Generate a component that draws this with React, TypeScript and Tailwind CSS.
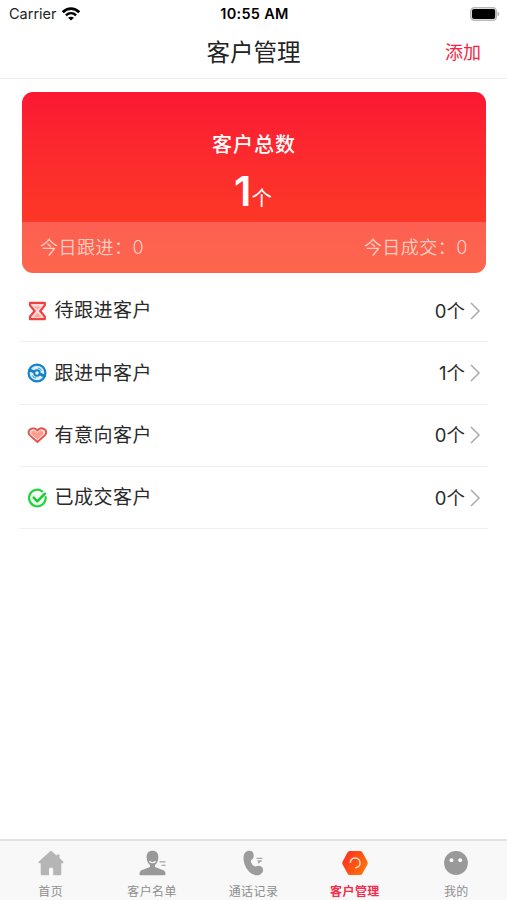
import type { ReactNode } from "react";
import { clsx } from "clsx";

function WifiIcon() {
  return (
    <svg width="18" height="14" viewBox="0 0 18 14" fill="none">
      <path d="M.8 5.200C5.400.4 12.600.4 17.200 5.200" stroke="#000" strokeWidth="2.800" />
      <path d="M3.900 8.400c3-2.800 7.200-2.800 10.200 0" stroke="#000" strokeWidth="2.400" />
      <path d="M9 13.600 6.100 10.700c1.700-1.400 4.100-1.400 5.800 0z" fill="#000" />
    </svg>
  );
}

function BatteryIcon() {
  return (
    <svg width="30" height="14" viewBox="0 0 30 14" fill="none">
      <rect x="0.8" y="0.8" width="25.600" height="12.400" rx="3.600" stroke="#b8b8b8" strokeWidth="1.500" />
      <rect x="2" y="2" width="23.200" height="10" rx="2" fill="#000" />
      <path d="M27.600 4.800c2.200.6 2.200 3.800 0 4.400z" fill="#b0b0b0" />
    </svg>
  );
}

function HourglassIcon() {
  return (
    <svg width="20" height="20" viewBox="0 0 20 20" fill="none" strokeLinejoin="round">
      <path
        d="M3 1.800h14.800v2.600L13.200 10l4.600 5.600v2.600H3v-2.600L7.600 10 3 4.400z"
        fill="#fdd9d7"
        stroke="#ee4240"
        strokeWidth="2.200"
      />
      <path d="M7.100 5.400h6.600l-3.300 3.200zM10.400 11.800l3.800 4.200H6.600z" fill="#f9a7a2" />
    </svg>
  );
}

function FollowingIcon() {
  return (
    <svg width="20" height="20" viewBox="0 0 20 20" fill="none" stroke="#1680c8">
      <circle cx="10" cy="10" r="8.400" fill="#d9eefb" strokeWidth="2.200" />
      <path d="M2 6.700 7 9M13 11l5 2.300" strokeWidth="3" />
      <path d="M10.800 5c1.900.2 3.100 1.100 3.800 2.600M9.200 15c-1.900-.2-3.100-1.100-3.800-2.600" stroke="#4da5dc" strokeWidth="1.200" />
      <circle cx="10" cy="10" r="2.700" fill="#fff" strokeWidth="2" />
    </svg>
  );
}

function HeartIcon() {
  return (
    <svg width="20" height="20" viewBox="0 0 20 20" fill="none" strokeLinejoin="round">
      <path
        d="M10.400 17 2.900 10.400C.8 8.200 1.300 5.200 3.500 4.100 5.800 2.900 8.800 3.200 10.400 5.500c1.600-2.300 4.500-2.600 6.800-1.400 2.200 1.100 2.700 4.100.6 6.300z"
        fill="#fde3df"
        stroke="#e8504a"
        strokeWidth="1.900"
      />
      <path
        d="m10.400 14.500-5.200-4.700C3.600 8.200 4.400 6 6.200 5.800c1.700-.2 3.200.8 4.200 2.300 1-1.500 2.300-2.500 4-2.300 1.800.2 2.800 2.400 1.200 4z"
        fill="#fb9f8d"
      />
    </svg>
  );
}

function DoneIcon() {
  return (
    <svg width="20" height="20" viewBox="0 0 20 20" fill="none" strokeLinecap="round" strokeLinejoin="round">
      <path d="M18.600 9.200A8.300 8.300 0 1 1 15.200 3.300" fill="#f1fdf3" stroke="#22d33c" strokeWidth="2.200" />
      <path d="m6.700 9.600 3.600 3.700 7.600-7.600" stroke="#16cb32" strokeWidth="2.400" />
    </svg>
  );
}

function HomeIcon() {
  return (
    <svg width="26" height="26" viewBox="0 0 26 26" fill="#b5b5b5">
      <path d="M12.200 1.200a1.200 1.200 0 0 1 1.600 0l5 4.500V4.600h2.700v3.500l3.700 3.500c.7.700.3 1.700-.6 1.700h-1.300v10.400c0 .9-.6 1.500-1.500 1.500h-6.600v-5.800c0-1-.6-1.600-1.500-1.600h-1.200c-.9 0-1.500.6-1.500 1.600v5.800H4.200c-.9 0-1.500-.6-1.500-1.500V13.300H1.400c-.9 0-1.300-1-.6-1.700z" />
    </svg>
  );
}

function ContactsIcon() {
  return (
    <svg width="28" height="26" viewBox="0 0 28 26" fill="none">
      <path
        d="M14.500.8c4 0 6 2.500 5.900 6.600-.1 3.400-1.600 6.100-3.400 7.500v2.200l7.800 3c1.800.7 2.700 1.800 2.700 3.600 0 1-.5 1.500-1.500 1.500H3c-1 0-1.500-.5-1.500-1.500 0-1.800.9-2.900 2.700-3.600l7.800-3v-2.200c-1.800-1.400-3.300-4.100-3.400-7.500C8.500 3.300 10.500.8 14.500.8z"
        fill="#999"
      />
      <path d="M11.400 11.200c1.800 1.900 4.400 1.900 6.200 0" stroke="#f8f8f8" strokeWidth="1.300" />
      <path d="M21.500 11.900h6M23.500 15.400h4" stroke="#a3a3a3" strokeWidth="1.300" />
    </svg>
  );
}

function CallIcon() {
  return (
    <svg width="26" height="26" viewBox="0 0 26 26" fill="none">
      <path
        d="M8.500.8c2.900-.5 4.700.8 5.100 3.500.3 2.500 0 4.300-1.700 5.300-1.200.7-1.300 1.800-.7 3.100.7 1.600 1.600 2.600 2.800 3.300 1.200.7 2.200.3 3.500-.1 2.500-.7 5.200.9 5.500 3.400.4 3.100-2 5.700-5.500 6C11.800 25.400 6.500 20.600 4.300 13.500 2.600 7.300 3.600 1.700 8.500.8z"
        fill="#9c9c9c"
      />
      <path d="M16.500 8.300h6M17.500 11h4.200M18.200 13.300l1.800-2" stroke="#a8a8a8" strokeWidth="1.300" />
    </svg>
  );
}

function ManageIcon() {
  return (
    <svg width="26" height="26" viewBox="0 0 26 26" fill="none">
      <defs>
        <linearGradient id="manage" x1="3" y1="6" x2="24" y2="20" gradientUnits="userSpaceOnUse">
          <stop stopColor="#fb3520" />
          <stop offset="1" stopColor="#ff7508" />
        </linearGradient>
      </defs>
      <path
        d="M8.200 1h9.600c1.300 0 2.100.5 2.700 1.600l4.600 8.300c.8 1.400.8 2.800 0 4.200l-4.600 8.300c-.6 1.100-1.400 1.600-2.700 1.600H8.200c-1.300 0-2.100-.5-2.700-1.600L.9 15.100c-.8-1.400-.8-2.800 0-4.200l4.600-8.300C6.100 1.500 6.900 1 8.200 1z"
        fill="url(#manage)"
      />
      <path d="M8.300 12.300a4.900 4.900 0 1 1 5.500 5.500" stroke="#ffe2d4" strokeWidth="1.500" strokeLinecap="round" />
    </svg>
  );
}

function MineIcon() {
  return (
    <svg width="26" height="26" viewBox="0 0 26 26">
      <circle cx="13" cy="13" r="11.900" fill="#999" />
      <circle cx="8.500" cy="10.200" r="1.900" fill="#fff" />
      <circle cx="17.200" cy="10.200" r="1.900" fill="#fff" />
    </svg>
  );
}

interface Group {
  label: string;
  count: number;
  icon: ReactNode;
}

const groups: Group[] = [
  { label: "待跟进客户", count: 0, icon: <HourglassIcon /> },
  { label: "跟进中客户", count: 1, icon: <FollowingIcon /> },
  { label: "有意向客户", count: 0, icon: <HeartIcon /> },
  { label: "已成交客户", count: 0, icon: <DoneIcon /> },
];

const tabs = [
  { label: "首页", icon: <HomeIcon /> },
  { label: "客户名单", icon: <ContactsIcon /> },
  { label: "通话记录", icon: <CallIcon /> },
  { label: "客户管理", icon: <ManageIcon />, active: true },
  { label: "我的", icon: <MineIcon /> },
];

function StatusBar() {
  return (
    <div className="grid h-7 grid-cols-3 items-center pl-[9px] pr-[7px] text-black">
      <div className="flex items-center gap-[5px] text-[14.5px] text-[#222]">
        Carrier
        <WifiIcon />
      </div>
      <div className="text-center text-[14.5px] font-semibold tracking-[0.3px]">10:55 AM</div>
      <div className="flex justify-end">
        <BatteryIcon />
      </div>
    </div>
  );
}

function SummaryCard() {
  return (
    <section className="mr-[21px] ml-[22px] mt-[13px] flex h-[181px] flex-col overflow-hidden rounded-[11px] bg-linear-to-b from-[#fb1733] to-[#fd4020] text-white">
      <div className="flex h-[130px] shrink-0 flex-col items-center pt-[38px]">
        <h2 className="text-[20px] leading-[30px] font-medium tracking-[1px]">客户总数</h2>
        <div className="mt-[6px] flex items-baseline leading-[50px]">
          <span className="-ml-[2px] text-[41px] font-semibold">1</span>
          <span className="text-[20.5px]">个</span>
        </div>
      </div>
      <div className="flex h-[51px] shrink-0 items-center justify-between bg-white/20 px-[18px] text-[18px] font-[350] tracking-[0.5px] text-[#ffcfc5]">
        <span>今日跟进：0</span>
        <span>今日成交：0</span>
      </div>
    </section>
  );
}

export default function App() {
  return (
    <div className="flex h-[900px] w-[507px] flex-col bg-white font-['Inter','Noto_Sans_CJK_SC',sans-serif]">
      <StatusBar />
      <header className="grid h-[51px] grid-cols-3 items-center border-b border-[#eeeeee] pr-[26px] pl-[26px]">
        <span />
        <h1 className="text-center text-[23.5px] leading-none text-[#222]">客户管理</h1>
        <button className="text-right text-[18px] leading-none text-[#f5233f]">添加</button>
      </header>

      <main className="flex-1">
        <SummaryCard />
        <ul className="mx-[19px] mt-[7px]">
          {groups.map((group) => (
            <li
              key={group.label}
              className="flex h-[62.3px] items-center border-b border-[#f0f0f0] pr-[7px] pl-2"
            >
              <span>{group.icon}</span>
              <span className="ml-[7.5px] flex-1 pt-[2px] text-[19px] tracking-[0.5px] text-[#2a2a2a]">
                {group.label}
              </span>
              <span className="pt-[2px] text-[18.5px] text-[#2a2a2a]">{group.count}个</span>
              <svg className="ml-[4px]" width="12" height="20" viewBox="0 0 12 20" fill="none">
                <path d="m2 2 8 8-8 8" stroke="#aaa" strokeWidth="1.500" />
              </svg>
            </li>
          ))}
        </ul>
      </main>

      <nav className="grid h-[61px] grid-cols-5 border-t-2 border-[#e2e2e2] bg-[#f8f8f8]">
        {tabs.map((tab) => (
          <div key={tab.label} className="flex flex-col items-center pt-[9px]">
            {tab.icon}
            <span
              className={clsx(
                "mt-[7px] text-[12px] leading-[18px] tracking-[0.4px]",
                tab.active ? "font-bold text-[#f92b4a]" : "text-[#8e8e8e]"
              )}
            >
              {tab.label}
            </span>
          </div>
        ))}
      </nav>
    </div>
  );
}
